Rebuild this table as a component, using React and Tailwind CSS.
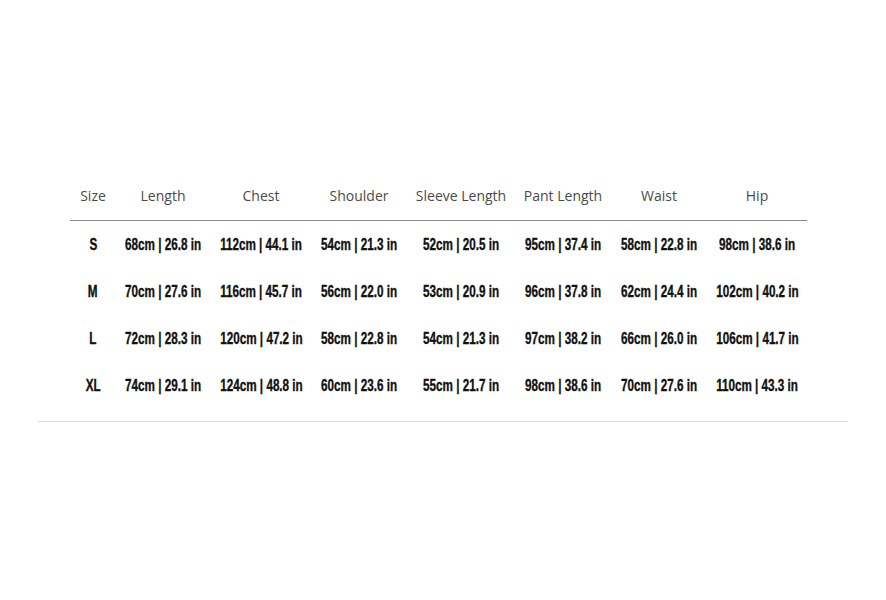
const headers = ['Size', 'Length', 'Chest', 'Shoulder', 'Sleeve Length', 'Pant Length', 'Waist', 'Hip'];

const rows = [
  ['S', '68cm | 26.8 in', '112cm | 44.1 in', '54cm | 21.3 in', '52cm | 20.5 in', '95cm | 37.4 in', '58cm | 22.8 in', '98cm | 38.6 in'],
  ['M', '70cm | 27.6 in', '116cm | 45.7 in', '56cm | 22.0 in', '53cm | 20.9 in', '96cm | 37.8 in', '62cm | 24.4 in', '102cm | 40.2 in'],
  ['L', '72cm | 28.3 in', '120cm | 47.2 in', '58cm | 22.8 in', '54cm | 21.3 in', '97cm | 38.2 in', '66cm | 26.0 in', '106cm | 41.7 in'],
  ['XL', '74cm | 29.1 in', '124cm | 48.8 in', '60cm | 23.6 in', '55cm | 21.7 in', '98cm | 38.6 in', '70cm | 27.6 in', '110cm | 43.3 in'],
];

const cols = 'grid grid-cols-[46px_94px_102px_94px_110px_94px_98px_98px]';

export default function App() {
  return (
    <div className="w-[886px] h-[600px] bg-white pt-[186px]">
      <div className="mx-[38px] border-b border-[#dcdcdc] pb-[12px]">
        <div className="ml-[32px] w-[737px]">
          <div className={`${cols} border-b border-[#8a8a8a] pb-[14px] font-['Open_Sans',sans-serif] text-[14px] text-[#4a4a4a] leading-[20px]`}>
            {headers.map((h) => (
              <div key={h} className="text-center">{h}</div>
            ))}
          </div>
          <div className="font-['Liberation_Sans',Arial,sans-serif] font-bold text-[16px] text-[#111] [-webkit-text-stroke:0.35px_#111]">
            {rows.map((r) => (
              <div key={r[0]} className={`${cols} h-[47px] items-center`}>
                {r.map((c, i) => (
                  <div key={i} className="flex justify-center whitespace-nowrap">
                    <span className="inline-block scale-x-[0.73] leading-[18px]">{c}</span>
                  </div>
                ))}
              </div>
            ))}
          </div>
        </div>
      </div>
    </div>
  );
}
